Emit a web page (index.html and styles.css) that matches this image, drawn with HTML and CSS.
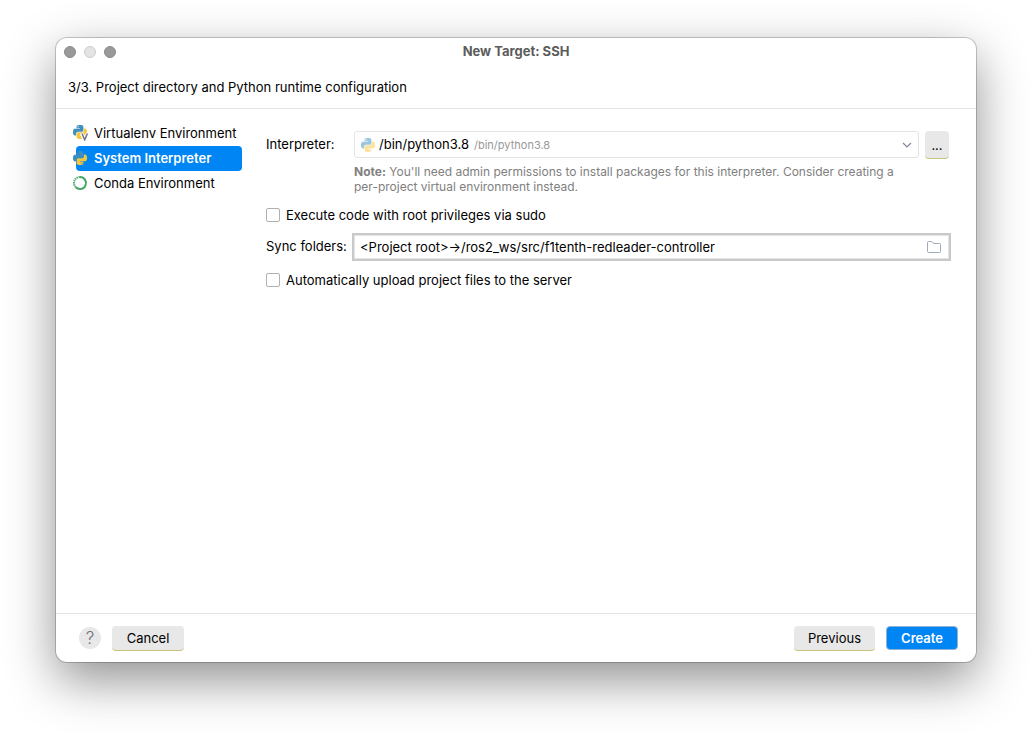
FILE: index.html
```
<!DOCTYPE html>
<html lang="en">
<head>
<meta charset="utf-8">
<title>New Target: SSH</title>
<link rel="stylesheet" href="styles.css">
</head>
<body>
<svg class="defs" aria-hidden="true">
  <defs>
    <path id="snake" d="M14.25.18l.9.2.73.26.59.3.45.32.34.34.25.34.16.33.1.3.04.26.02.2-.01.13V8.5l-.05.63-.13.55-.21.46-.26.38-.3.31-.33.25-.35.19-.35.14-.33.1-.3.07-.26.04-.21.02H8.77l-.69.05-.59.14-.5.22-.41.27-.33.32-.27.35-.2.36-.15.37-.1.35-.07.32-.04.27-.02.21v3.06H3.17l-.21-.03-.28-.07-.32-.12-.35-.18-.36-.26-.36-.36-.35-.46-.32-.59-.28-.73-.21-.88-.14-1.05-.05-1.23.06-1.22.16-1.04.24-.87.32-.71.36-.57.4-.44.42-.33.42-.24.4-.16.36-.1.32-.05.24-.01h.16l.06.01h8.16v-.83H6.18l-.01-2.75-.02-.37.05-.34.11-.31.17-.28.25-.26.31-.23.38-.2.44-.18.51-.15.58-.12.64-.1.71-.06.77-.04.84-.02 1.27.05zm-6.3 1.98l-.23.33-.08.41.08.41.23.34.33.22.41.09.41-.09.33-.22.23-.34.08-.41-.08-.41-.23-.33-.33-.22-.41-.09-.41.09z"/>
    <symbol id="python" viewBox="0 0 24 24">
      <use href="#snake" class="snake-blue"/>
      <use href="#snake" class="snake-yellow" transform="rotate(180 12 12)"/>
    </symbol>
  </defs>
</svg>
<main class="dialog">
  <header class="titlebar">
    <div class="lights"><span class="light"></span><span class="light light-off"></span><span class="light"></span></div>
    <h1 class="title">New Target: SSH</h1>
  </header>
  <p class="step">3/3. Project directory and Python runtime configuration</p>
  <div class="content">
    <nav class="sidebar">
      <button class="env" type="button">
        <svg class="env-icon" viewBox="0 0 16 16"><use href="#python" x="0" y="0" width="14" height="14"/><path d="M8.500 8l3.200 7 3.200-7" fill="none" stroke="#fff" stroke-width="3.500"/><path d="M9 8.500l2.700 6.300 2.700-6.300" fill="none" stroke="#6e7681" stroke-width="1.500"/></svg>
        Virtualenv Environment
      </button>
      <button class="env env-selected" type="button">
        <svg class="env-icon" viewBox="0 0 16 16"><use href="#python" x="0" y="1" width="14" height="14"/></svg>
        System Interpreter
      </button>
      <button class="env" type="button">
        <svg class="env-icon" viewBox="0 0 16 16" fill="none" stroke="#43a665"><path d="M7 2a6 6 0 1 1-4.200 10.300" stroke-width="2"/><path d="M2.800 12.300A6 6 0 0 1 7 2" stroke-width="2" stroke-dasharray="1.300 .8"/></svg>
        Conda Environment
      </button>
    </nav>
    <form class="form">
      <label class="label" for="interpreter">Interpreter:</label>
      <div class="picker">
        <div class="combo">
          <svg class="combo-icon" viewBox="0 0 24 24"><use href="#python"/></svg>
          <select class="combo-select" id="interpreter"><option>/bin/python3.8</option></select>
          <span class="combo-hint">/bin/python3.8</span>
          <svg class="chevron" viewBox="0 0 10 6"><path d="M1 1l4 4 4-4" fill="none" stroke="#7f8799" stroke-width="1.200"/></svg>
        </div>
        <button class="button browse" type="button">...</button>
      </div>
      <p class="note"><b>Note:</b> You'll need admin permissions to install packages for this interpreter. Consider creating a per-project virtual environment instead.</p>
      <label class="check"><input class="box" type="checkbox">Execute code with root privileges via sudo</label>
      <label class="label" for="sync">Sync folders:</label>
      <div class="sync">
        <input class="sync-input" id="sync" type="text" value="&lt;Project root&gt;→/ros2_ws/src/f1tenth-redleader-controller">
        <button class="folder" type="button" aria-label="Browse folders"><svg class="folder-icon" viewBox="0 0 16 14"><path d="M1.500 2.500q0-1 1-1h3q.6 0 1 .5l1 1.500h6q1 0 1 1v7q0 1-1 1h-11q-1 0-1-1z" fill="none" stroke="#a0a9bd"/></svg></button>
      </div>
      <label class="check check-last"><input class="box" type="checkbox">Automatically upload project files to the server</label>
    </form>
  </div>
  <footer class="footer">
    <button class="help" type="button">?</button>
    <button class="button" type="button">Cancel</button>
    <span class="spacer"></span>
    <button class="button previous" type="button">Previous</button>
    <button class="button create" type="button">Create</button>
  </footer>
</main>
</body>
</html>
```
FILE: styles.css
```
* { box-sizing: border-box; }
body {
  margin: 0;
  min-height: 100vh;
  padding: 38px 56px 74px;
  display: flex;
  background: #fff;
  color: #000;
  font: 13px/16px Inter, "Liberation Sans", sans-serif;
}
button, input, select { font: inherit; color: inherit; margin: 0; }
.defs { position: absolute; width: 0; height: 0; }
.snake-blue { fill: #3c8fbf; }
.snake-yellow { fill: #f8c63d; }
.dialog {
  flex: 1;
  display: flex;
  flex-direction: column;
  border-radius: 11px;
  background: #fff;
  box-shadow: 0 0 0 1px rgba(0, 0, 0, .2), 0 18px 50px rgba(0, 0, 0, .44);
}
.titlebar {
  display: grid;
  grid-template-columns: 1fr auto 1fr;
  align-items: center;
  height: 28px;
  padding: 0 8px;
}
.lights { display: flex; gap: 8px; }
.light { width: 12px; height: 12px; border-radius: 50%; background: #999; border: 1px solid #8b8b8b; }
.light-off { background: #e4e4e4; border-color: #cdcdcd; }
.title { margin: 0; padding-bottom: 2px; font-size: 13px; font-weight: 700; color: #5c5c5c; }
.step { margin: 0; padding: 13px 12px; border-bottom: 1px solid #e4e4e4; }
.content { flex: 1; display: flex; gap: 24px; padding: 12px 27px 12px 20px; }
.sidebar { display: flex; flex-direction: column; width: 166px; }
.env {
  display: flex;
  align-items: center;
  gap: 5px;
  height: 25px;
  padding: 0 0 2px;
  border: 0;
  border-radius: 4px;
  background: none;
  text-align: left;
  white-space: nowrap;
}
.env-selected { background: #0085f5; color: #fff; font-weight: 600; }
.env-icon { width: 16px; height: 16px; margin-left: -3px; flex: none; }
.form {
  flex: 1;
  display: grid;
  grid-template-columns: 82px 1fr;
  column-gap: 6px;
  align-content: start;
  align-items: center;
  padding-top: 10px;
}
.label { padding-bottom: 2px; white-space: nowrap; }
.picker { display: flex; gap: 6px; }
.combo {
  flex: 1;
  display: flex;
  align-items: center;
  height: 27px;
  padding: 0 6px;
  border: 1px solid #e4e4e4;
  border-radius: 3px;
}
.combo-icon { width: 14px; height: 14px; margin-right: 4px; opacity: .5; }
.combo-select { appearance: none; padding: 0 0 1px; border: 0; background: none; }
.combo-hint { margin-left: 4px; font-size: 11px; color: #999; }
.chevron { width: 10px; height: 6px; margin-left: auto; }
.button {
  min-width: 72px;
  height: 25px;
  padding: 0 14px;
  border: 0;
  border-bottom: 1px solid #c9c27a;
  border-radius: 4px;
  background: #e8e8e8;
}
.browse { min-width: 24px; height: 28px; padding: 0; }
.note { grid-column: 2; margin: 5px 50px 0 0; font-size: 12px; line-height: 15px; color: #808080; }
.check { grid-column: 1 / -1; display: flex; align-items: center; gap: 6px; margin: 13px 0 12px; }
.check-last { margin-bottom: 0; }
.box {
  appearance: none;
  width: 14px;
  height: 14px;
  border: 1px solid #b0b0b0;
  border-radius: 2px;
  background: #fff;
}
.sync {
  display: flex;
  align-items: center;
  height: 24px;
  border: 1px solid #e4e4e4;
  box-shadow: 0 0 0 2px #c9c9c9;
}
.sync-input { flex: 1; min-width: 0; padding: 0 5px 1px; border: 0; outline: 0; background: none; }
.folder { display: flex; padding: 0 6px; border: 0; background: none; }
.folder-icon { width: 16px; height: 14px; }
.footer {
  display: flex;
  align-items: center;
  gap: 11px;
  height: 49px;
  padding: 0 18px 0 23px;
  border-top: 1px solid #e4e4e4;
}
.help { width: 22px; height: 22px; padding: 0; border: 0; border-radius: 50%; background: #e8e8e8; color: #6c7080; font-size: 17px; font-weight: 300; line-height: 22px; }
.spacer { flex: 1; }
.create { height: 24px; border: 1px solid #8fb2d4; background: #0085f5; color: #fff; font-weight: 600; }
```
